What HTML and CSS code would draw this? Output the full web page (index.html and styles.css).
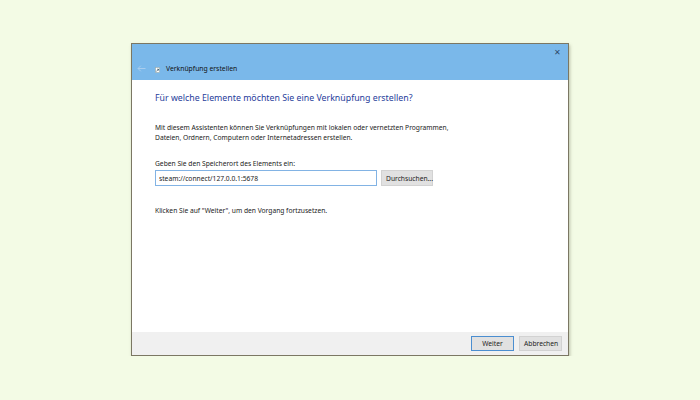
FILE: index.html
```html
<!DOCTYPE html>
<html lang="de">
<head>
  <meta charset="UTF-8">
  <title>Verknüpfung erstellen</title>
  <link rel="stylesheet" href="styles.css">
</head>
<body>
  <div class="window">
    <div class="titlebar">
      <div class="close">&#x2715;</div>
      <div class="title-row">
        <svg class="back" width="9" height="7" viewBox="0 0 9 7"><path d="M8.5 3.5H1M3.8 0.7L1 3.5l2.8 2.8" fill="none" stroke="#a9cdee" stroke-width="1"/></svg>
        <svg class="app-icon" width="5" height="6" viewBox="0 0 5 6"><rect x="0.5" y="0.5" width="4" height="5" fill="#fff" stroke="#9aa" stroke-width="0.6"/><path d="M1.3 4.5L3.5 2.2M2.2 2.2h1.3v1.3" fill="none" stroke="#245" stroke-width="0.7"/></svg>
        <span class="title">Verknüpfung erstellen</span>
      </div>
    </div>

    <div class="content">
      <h1>Für welche Elemente möchten Sie eine Verknüpfung erstellen?</h1>
      <p class="intro">Mit diesem Assistenten können Sie Verknüpfungen mit lokalen oder vernetzten Programmen,<br>Dateien, Ordnern, Computern oder Internetadressen erstellen.</p>
      <label for="location">Geben Sie den Speicherort des Elements ein:</label>
      <div class="location-row">
        <input type="text" id="location" value="steam://connect/127.0.0.1:5678">
        <button class="btn">Durchsuchen...</button>
      </div>
      <p class="hint">Klicken Sie auf "Weiter", um den Vorgang fortzusetzen.</p>
    </div>

    <div class="footer">
      <button class="btn btn-default">Weiter</button>
      <button class="btn">Abbrechen</button>
    </div>
  </div>
</body>
</html>
```

FILE: styles.css
```css
body {
  margin: 0;
  background: #f3fbe5;
  font-family: "Noto Sans", "Open Sans", sans-serif;
  color: #222;
}
.window {
  width: 436px;
  height: 311px;
  margin: 43px 0 0 131px;
  border: 1px solid #7b7763;
  box-shadow: 1px 2px 3px rgba(90, 90, 60, 0.35);
  background: #fff;
  display: flex;
  flex-direction: column;
}
.titlebar {
  height: 36px;
  background: #7ab8ea;
  position: relative;
}
.close {
  position: absolute;
  right: 7px;
  top: 2px;
  font-size: 8px;
  color: #2d4a6a;
}
.title-row {
  display: flex;
  align-items: center;
  padding: 19px 0 0 5px;
  height: 10px;
}
.back {
  margin-right: 9px;
}
.app-icon {
  margin-right: 6px;
  margin-top: 4px;
}
.title {
  font-size: 6.8px;
  color: #111;
}
.content {
  flex: 1;
  padding: 12px 0 0 23px;
}
h1 {
  margin: 0;
  font-size: 8.8px;
  font-weight: normal;
  color: #1f3d9b;
}
.intro {
  margin: 19px 0 0;
  font-size: 6.7px;
  line-height: 10px;
}
label {
  display: block;
  margin-top: 16px;
  font-size: 6.7px;
}
.location-row {
  display: flex;
  gap: 4px;
  margin-top: 2px;
}
input {
  width: 222px;
  height: 16px;
  box-sizing: border-box;
  border: 1px solid #82b3e4;
  padding: 0 3px;
  font-family: inherit;
  font-size: 6.7px;
  color: #222;
  margin: 0;
}
.btn {
  height: 16px;
  box-sizing: border-box;
  background: #e1e1e1;
  border: 1px solid #d2d2d2;
  font-family: inherit;
  font-size: 6.7px;
  color: #222;
  padding: 0 4px;
  margin: 0;
}
.location-row .btn {
  width: 52px;
}
.hint {
  margin: 20px 0 0;
  font-size: 6.7px;
}
.footer {
  height: 23px;
  background: #f0f0f0;
  display: flex;
  justify-content: flex-end;
  align-items: center;
  gap: 5px;
  padding-right: 6px;
}
.footer .btn {
  width: 43px;
  height: 15px;
}
.btn-default {
  border-color: #4b8ed0;
}
```
